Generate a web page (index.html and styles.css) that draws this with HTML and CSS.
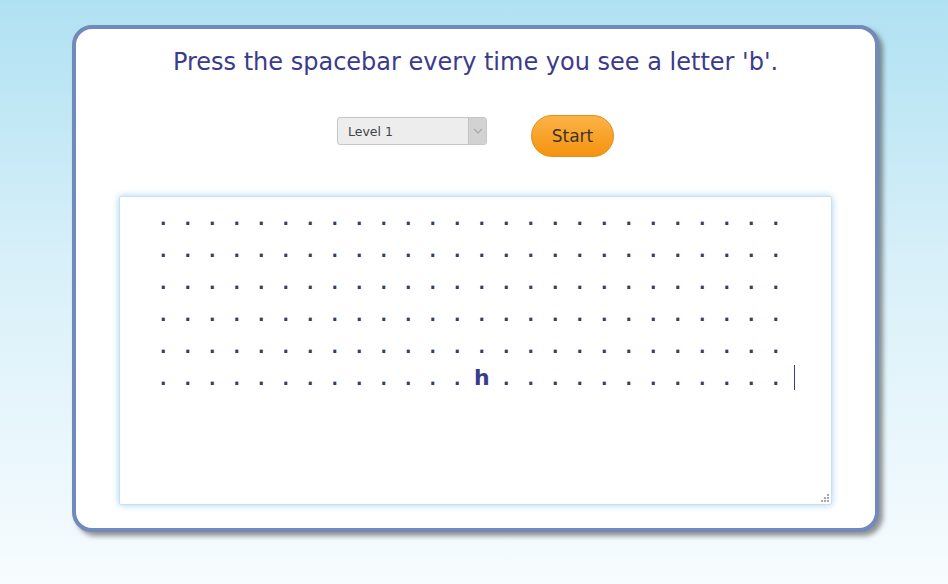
FILE: index.html
```html
<!DOCTYPE html>
<html lang="en">
<head>
    <meta charset="UTF-8">
    <title>Letter Spotting</title>
    <link rel="stylesheet" href="styles.css">
</head>
<body>
    <div class="card">
        <h1 class="title">Press the spacebar every time you see a letter 'b'.</h1>

        <div class="controls">
            <div class="level-select">
                <span class="level-label">Level 1</span>
                <span class="level-arrow">
                    <svg width="10" height="6" viewBox="0 0 10 6"><path d="M1 1 L5 5 L9 1" fill="none" stroke="#a8a8a8" stroke-width="1.2"/></svg>
                </span>
            </div>
            <button class="start-btn">Start</button>
        </div>

        <div class="board" id="board"></div>
    </div>

    <script>
        const board = document.getElementById('board');
        const rows = 6;
        const cols = 26;

        for (let r = 0; r < rows; r++) {
            const row = document.createElement('div');
            row.className = 'board-row';
            for (let c = 0; c < cols; c++) {
                const cell = document.createElement('span');
                cell.className = 'cell';
                if (r === 5 && c === 13) {
                    cell.textContent = 'h';
                    cell.classList.add('letter');
                } else {
                    cell.textContent = '.';
                }
                row.appendChild(cell);
            }
            if (r === rows - 1) {
                const caret = document.createElement('span');
                caret.className = 'caret';
                row.appendChild(caret);
            }
            board.appendChild(row);
        }

        const grip = document.createElement('span');
        grip.className = 'grip';
        grip.innerHTML = '<svg width="8" height="8" viewBox="0 0 8 8" fill="#a8a8a8"><rect x="6" y="0" width="2" height="2"/><rect x="3" y="3" width="2" height="2"/><rect x="6" y="3" width="2" height="2"/><rect x="0" y="6" width="2" height="2"/><rect x="3" y="6" width="2" height="2"/><rect x="6" y="6" width="2" height="2"/></svg>';
        board.appendChild(grip);
    </script>
</body>
</html>
```

FILE: styles.css
```css
html, body {
    height: 100%;
}

body {
    margin: 0;
    font-family: "DejaVu Sans", Verdana, sans-serif;
    background: linear-gradient(to bottom, #b0e1f2 0%, #d8f0f9 45%, #f7fcfe 100%);
}

.card {
    box-sizing: border-box;
    width: 807px;
    height: 507px;
    margin: 25px 0 0 72px;
    background-color: #fff;
    border: 4px solid #7189bb;
    border-radius: 20px;
    box-shadow: 4px 4px 5px rgba(60, 60, 60, 0.55);
    display: flex;
    flex-direction: column;
    align-items: center;
}

.title {
    margin: 19px 0 0;
    font-size: 24px;
    font-weight: normal;
    color: #3b3b8c;
}

.controls {
    display: flex;
    align-items: flex-start;
    gap: 44px;
    margin-top: 39px;
}

.level-select {
    box-sizing: border-box;
    width: 150px;
    height: 28px;
    margin-top: 2px;
    display: flex;
    align-items: stretch;
    background-color: #ededed;
    border: 1px solid #c6c6c6;
    border-radius: 3px;
    font-family: "DejaVu Sans", Tahoma, sans-serif;
    font-size: 12.5px;
    color: #444;
}

.level-label {
    flex: 1;
    display: flex;
    align-items: center;
    padding-left: 10px;
}

.level-arrow {
    width: 17px;
    display: flex;
    align-items: center;
    justify-content: center;
    background-color: #d2d2d2;
    border-left: 1px solid #c2c2c2;
    border-radius: 0 2px 2px 0;
}

.start-btn {
    box-sizing: border-box;
    width: 83px;
    height: 42px;
    padding: 0;
    border: 1px solid #e48d17;
    border-radius: 21px;
    background: linear-gradient(to bottom, #fbb347 0%, #f8a128 55%, #f4930f 100%);
    font-family: "DejaVu Sans", Tahoma, sans-serif;
    font-size: 17px;
    color: #3d3428;
    cursor: pointer;
}

.board {
    position: relative;
    box-sizing: border-box;
    width: 713px;
    height: 309px;
    margin-top: 39px;
    padding: 5px 0 0 31px;
    border: 1px solid #c6e0f5;
    border-radius: 2px;
    box-shadow: 0 0 7px rgba(130, 190, 240, 0.7);
    font-family: "DejaVu Sans", Verdana, sans-serif;
    font-size: 22px;
    font-weight: bold;
    color: #3a3a68;
}

.board-row {
    height: 32px;
    line-height: 32px;
    white-space: nowrap;
}

.cell {
    display: inline-block;
    width: 24.5px;
    text-align: center;
    font-size: 17px;
}

.letter {
    font-size: 22px;
    color: #3a3a8e;
}

.caret {
    display: inline-block;
    vertical-align: top;
    width: 1px;
    height: 25px;
    margin: 3px 0 0 6px;
    background-color: #3c3c80;
}

.grip {
    position: absolute;
    right: 2px;
    bottom: 2px;
    line-height: 0;
}
```
